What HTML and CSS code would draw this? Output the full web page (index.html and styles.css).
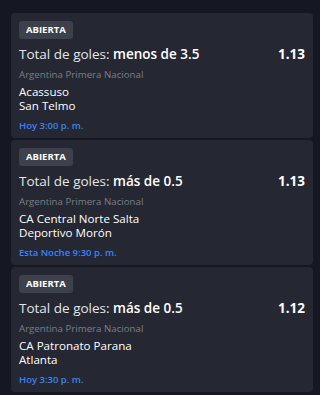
FILE: index.html
```html
<!DOCTYPE html>
<html lang="es">
<head>
<meta charset="utf-8">
<link rel="stylesheet" href="styles.css">
</head>
<body>
<div class="list">
  <div class="card">
    <span class="badge">ABIERTA</span>
    <div class="head">
      <div class="market">Total de goles: <b>menos de 3.5</b></div>
      <div class="odds">1.13</div>
    </div>
    <div class="league">Argentina Primera Nacional</div>
    <div class="teams"><div>Acassuso</div><div>San Telmo</div></div>
    <div class="time">Hoy 3:00 p. m.</div>
  </div>
  <div class="card">
    <span class="badge">ABIERTA</span>
    <div class="head">
      <div class="market">Total de goles: <b>más de 0.5</b></div>
      <div class="odds">1.13</div>
    </div>
    <div class="league">Argentina Primera Nacional</div>
    <div class="teams"><div>CA Central Norte Salta</div><div>Deportivo Morón</div></div>
    <div class="time">Esta Noche 9:30 p. m.</div>
  </div>
  <div class="card">
    <span class="badge">ABIERTA</span>
    <div class="head">
      <div class="market">Total de goles: <b>más de 0.5</b></div>
      <div class="odds">1.12</div>
    </div>
    <div class="league">Argentina Primera Nacional</div>
    <div class="teams"><div>CA Patronato Parana</div><div>Atlanta</div></div>
    <div class="time">Hoy 3:30 p. m.</div>
  </div>
</div>
</body>
</html>
```
FILE: styles.css
```css
html, body {
  margin: 0;
  padding: 0;
  background: #151823;
}
body {
  font-family: "Open Sans", "Noto Sans", sans-serif;
  color: #ffffff;
}
.list {
  display: flex;
  flex-direction: column;
  gap: 2px;
  padding: 13px 7px 0 11px;
}
.card {
  background: #252832;
  border-radius: 4px;
  height: 125px;
  box-sizing: border-box;
  padding: 8px 8px 0 8px;
  display: flex;
  flex-direction: column;
  align-items: flex-start;
}
.badge {
  display: block;
  background: #3d414c;
  color: #ffffff;
  font-size: 9.5px;
  font-weight: 700;
  line-height: 18px;
  height: 18px;
  padding: 0 7px;
  border-radius: 3px;
}
.head {
  align-self: stretch;
  display: flex;
  justify-content: space-between;
  align-items: baseline;
  margin-top: 6px;
  line-height: 18px;
  font-size: 13.5px;
}
.market {
  color: #e4e5e8;
}
.market b {
  font-weight: 600;
  color: #ffffff;
}
.odds {
  font-weight: 700;
}
.league {
  margin-top: 5px;
  font-size: 9.7px;
  color: #7b7e88;
  line-height: 13px;
}
.teams {
  margin-top: 4px;
  font-size: 11.6px;
  line-height: 14px;
  color: #ffffff;
}
.time {
  margin-top: 6px;
  font-size: 9.5px;
  font-weight: 600;
  color: #3b82f6;
  line-height: 13px;
}
```
